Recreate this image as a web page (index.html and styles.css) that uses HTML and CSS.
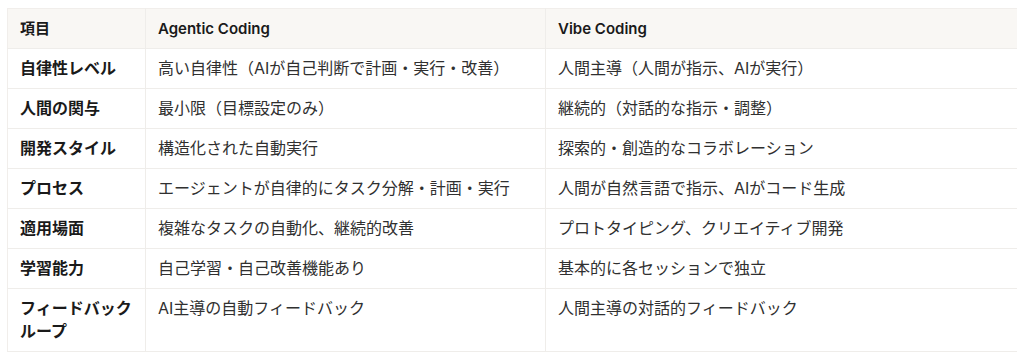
FILE: index.html
```html
<!DOCTYPE html>
<html lang="ja">
<head>
<meta charset="utf-8">
<link rel="stylesheet" href="styles.css">
</head>
<body>
<table class="cmp">
  <colgroup>
    <col class="c1"><col class="c2"><col class="c3">
  </colgroup>
  <thead>
    <tr><th>項目</th><th>Agentic Coding</th><th>Vibe Coding</th></tr>
  </thead>
  <tbody>
    <tr><td class="k">自律性レベル</td><td>高い自律性（AIが自己判断で計画・実行・改善）</td><td>人間主導（人間が指示、AIが実行）</td></tr>
    <tr><td class="k">人間の関与</td><td>最小限（目標設定のみ）</td><td>継続的（対話的な指示・調整）</td></tr>
    <tr><td class="k">開発スタイル</td><td>構造化された自動実行</td><td>探索的・創造的なコラボレーション</td></tr>
    <tr><td class="k">プロセス</td><td>エージェントが自律的にタスク分解・計画・実行</td><td>人間が自然言語で指示、AIがコード生成</td></tr>
    <tr><td class="k">適用場面</td><td>複雑なタスクの自動化、継続的改善</td><td>プロトタイピング、クリエイティブ開発</td></tr>
    <tr><td class="k">学習能力</td><td>自己学習・自己改善機能あり</td><td>基本的に各セッションで独立</td></tr>
    <tr><td class="k">フィードバック<br>ループ</td><td>AI主導の自動フィードバック</td><td>人間主導の対話的フィードバック</td></tr>
  </tbody>
</table>
</body>
</html>
```
FILE: styles.css
```css
html, body {
  background: #ffffff;
}
body {
  margin: 8px 7px;
  font-family: "Inter", "Noto Sans CJK JP", sans-serif;
  color: #1f1f1f;
}
.cmp {
  width: 1010px;
  border-collapse: collapse;
  table-layout: fixed;
  border: 1px solid #f1eeeb;
}
.c1 { width: 138px; }
.c2 { width: 400px; }
.c3 { width: 472px; }
.cmp th, .cmp td {
  text-align: left;
  vertical-align: top;
  padding: 8px 12px;
  font-size: 16px;
  line-height: 23px;
  border-bottom: 1px solid #efedea;
  border-left: 1px solid #efedea;
}
.cmp th:first-child, .cmp td:first-child {
  border-left: none;
}
.cmp thead th {
  background: #f9f7f4;
  font-weight: 600;
  font-size: 15px;
  color: #1a1a1a;
}
.cmp td {
  color: #303030;
}
.cmp td.k {
  font-weight: 700;
  color: #1a1a1a;
}
```
